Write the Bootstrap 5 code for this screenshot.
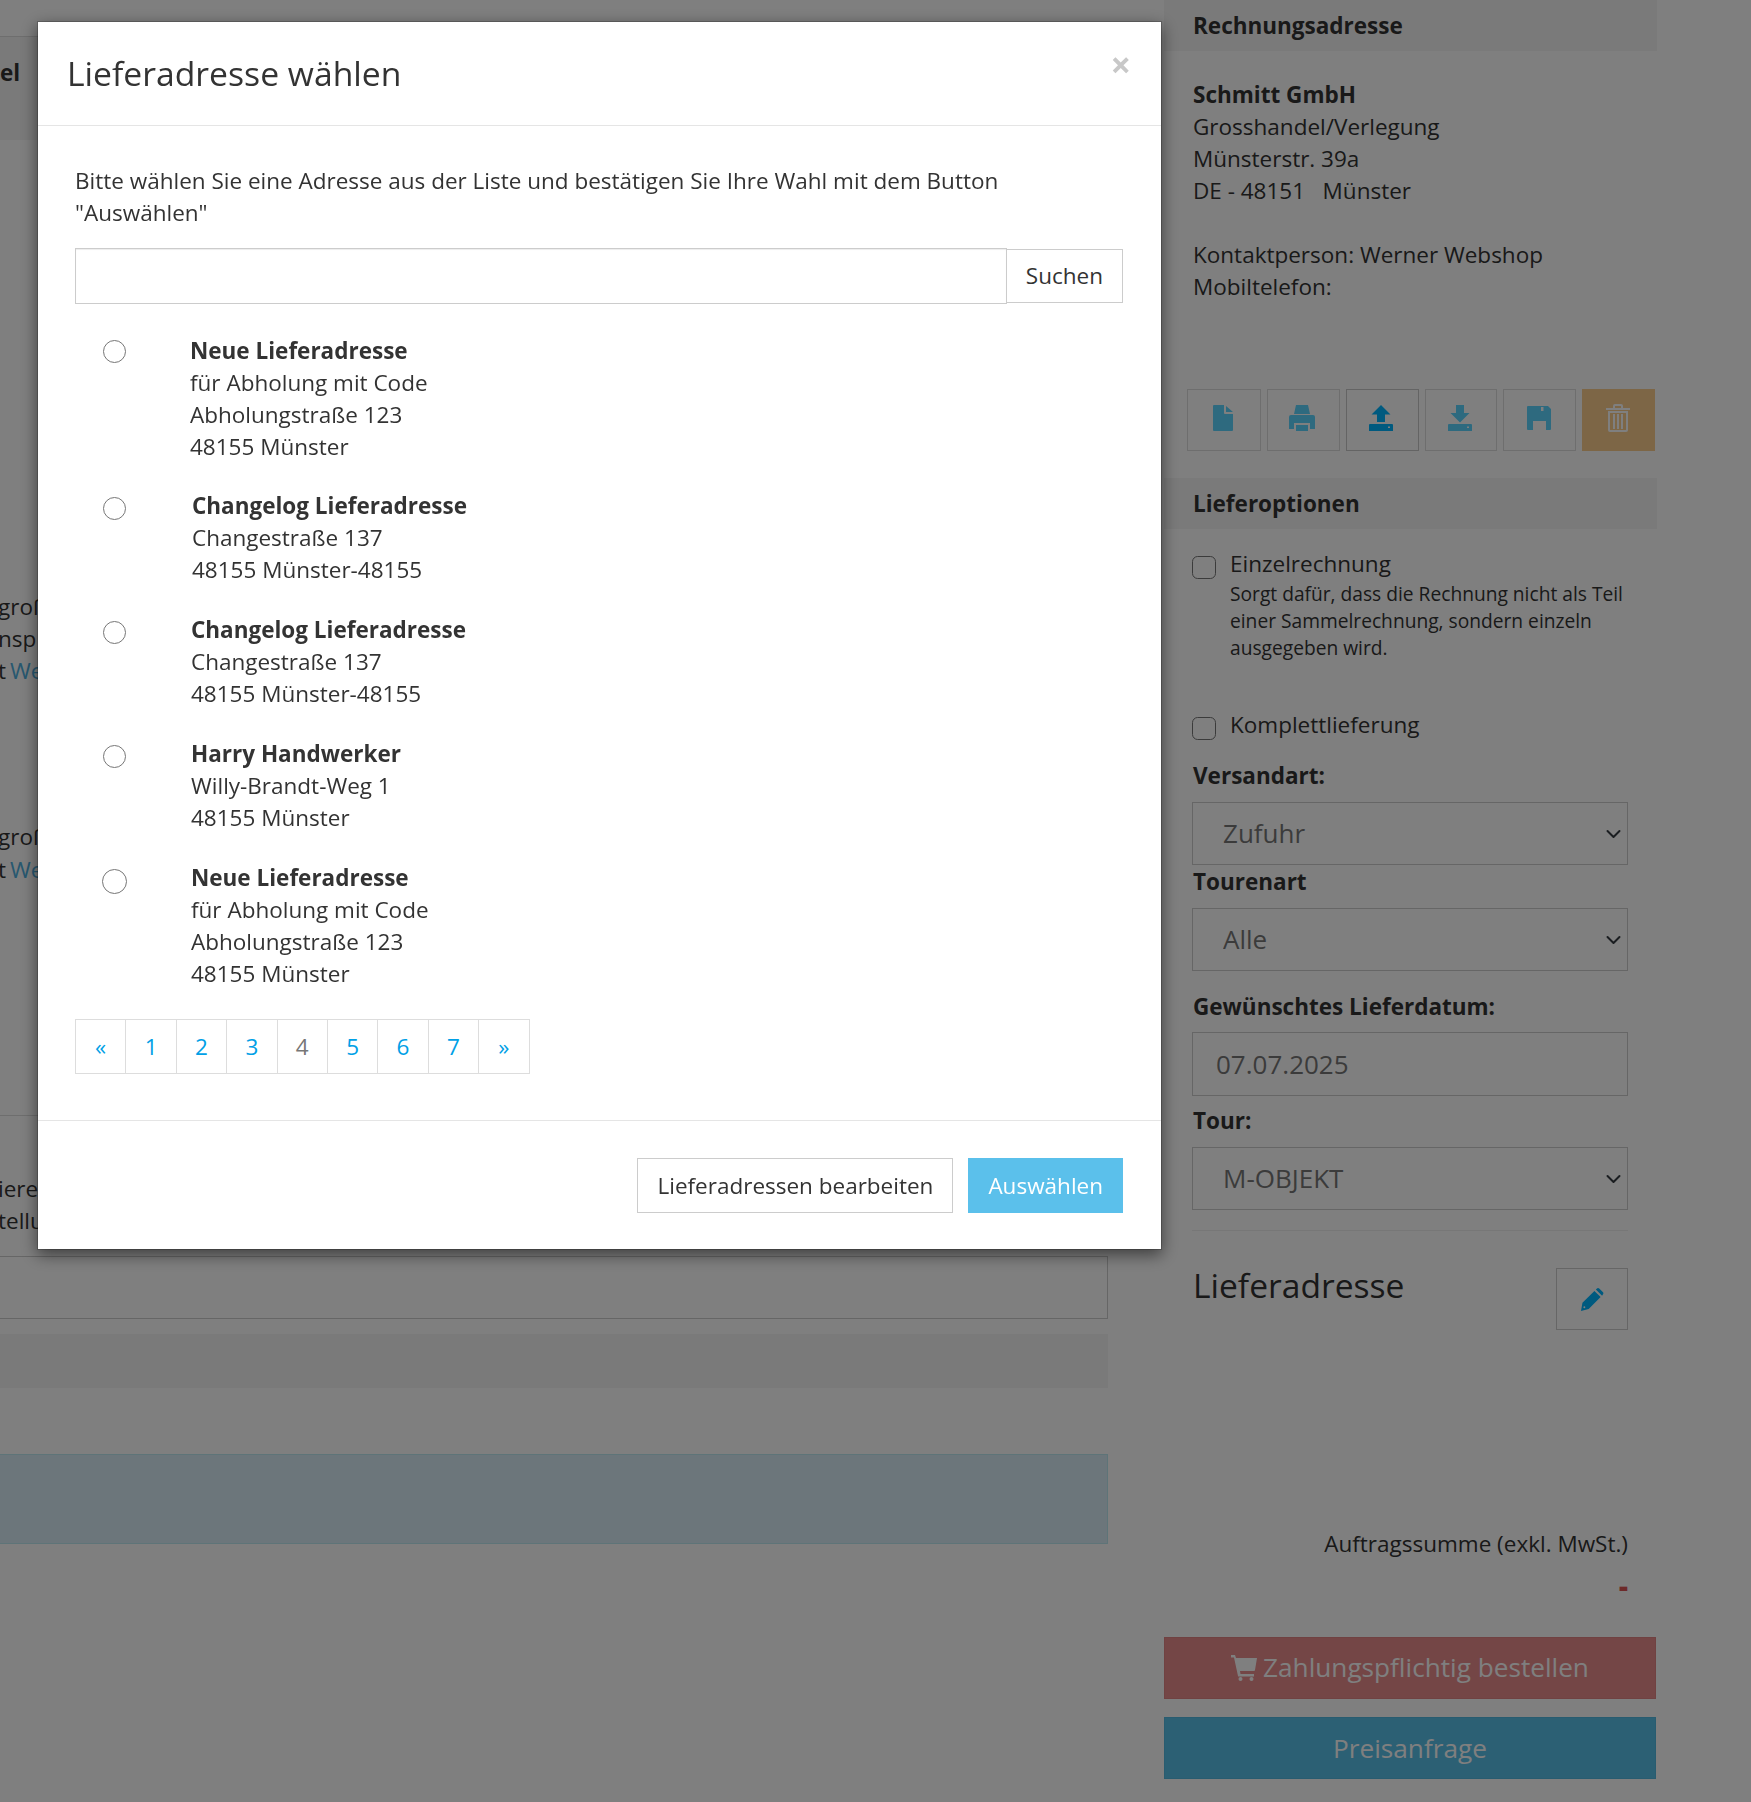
<!DOCTYPE html>
<html lang="de">

<head>
  <meta charset="UTF-8">
  <title>Lieferadresse wählen</title>
  <link href="https://cdn.jsdelivr.net/npm/bootstrap@5.3.0/dist/css/bootstrap.min.css" rel="stylesheet" />
  <style>
    body {
      font-family: "Open Sans", "Liberation Sans", sans-serif;
      font-size: 22.5px;
      line-height: 32px;
      color: #333;
      background: #fff;
      height: 1802px;
      overflow: hidden;
    }

    a { color: #00a0e6; text-decoration: none; }

    /* page behind the dialog */
    .left-side { width: 1108px; flex: none; overflow: hidden; }
    .right-side { width: 493px; flex: none; margin-left: 56px; }

    .article-bar { margin-top: 36px; height: 104px; background: #f5f5f5; border-top: 1px solid #ddd; font-weight: 700; padding-top: 20px; }
    .frag-one, .frag-two, .frag-three { margin-left: -2px; word-spacing: -2px; }
    .frag-one a, .frag-two a { color: #4fb0e0; }
    .frag-one { margin-top: 451px; }
    .frag-two { margin-top: 133px; line-height: 33px; }
    .left-rule { margin: 229px 0 0; height: 1px; background: #ddd; }
    .frag-three { margin-top: 57px; }
    .left-box { margin-top: 19px; height: 63px; border: 1px solid #ccc; border-left: 0; }
    .left-grey { margin-top: 15px; height: 54px; background: #f5f5f5; }
    .left-info { margin-top: 66px; height: 90px; background: #d9edf7; border: 1px solid #bce8f1; border-left: 0; }

    .side-head { height: 51px; line-height: 51px; padding-left: 29px; background: #f5f5f5; font-weight: 700; }
    .bill-addr { margin-top: 28px; padding-left: 29px; }
    .tool-row { margin: 86px 0 0 23px; column-gap: 6px; }
    .tool-btn { width: 72.8px; height: 62px; padding: 0 2px 4px 0; border: 1px solid #dcdcdc; border-radius: 0; color: #5cd4ff; background: #fff; }
    .tool-row .tool-btn:first-child { width: 74px; }
    .tool-on { border-color: #c8c8c8; color: #00b4ff; }
    .tool-del { background: #facc8c; border-color: #facc8c; color: #fff; }
    .options-head { margin-top: 27px; }

    .opt-area { margin-left: 28px; width: 436px; }
    .opt-check { margin-top: 19px; }
    .opt-check + .opt-check { margin-top: 48px; }
    .opt-box { width: 24px; height: 23px; flex: none; margin: 8px 14px 0 0; border: 1.6px solid #767676; border-radius: 4px; background: #fff; }
    .opt-help { font-size: 19.2px; line-height: 27px; }
    .field-label { font-weight: 700; margin: 19px 0 10px 1px; }
    .field-label.tight { margin: 1px 0 10px 1px; }
    .field-label.wide { margin: 20px 0 9px 1px; }
    .field-label.mid { margin: 9px 0 10px 1px; }
    .field-select, .field-input { height: 63px; border: 1px solid #ccc; border-radius: 0; font-size: 26px; color: #777; padding: 0 30px 0 30px; background-position: right 3px center; background-size: 21px 16px; }
    .field-input { padding-left: 23px; height: 64px; }
    .side-rule { margin: 20px 0 0; height: 1px; background: #eee; }
    .ship-title { margin: -3px 0 0 1px; font-size: 33.6px; line-height: 44px; font-weight: 400; }
    .ship-row { margin-top: 35px; }
    .ship-edit { width: 72px; height: 62px; margin-top: 2px; padding: 0; border: 1px solid #ccc; border-radius: 0; color: #00b4ff; background: #fff; }
    .sum-label { margin-top: 198px; text-align: right; }
    .sum-value { margin-top: 9px; text-align: right; font-size: 28px; font-weight: 800; color: #da5454; }
    .order-btn { display: block; width: 492px; height: 62px; padding: 0; border-radius: 0; font-size: 26.2px; color: #fff; }
    .order-red { margin-top: 36px; background: #e88c8c; border-color: #e08484; column-gap: 6px; }
    .order-blue { margin-top: 18px; padding-top: 2px; background: #58c0e8; border-color: #52b8e0; }

    /* dialog */
    .modal-backdrop.show { opacity: .5; }
    .addr-dialog { margin: 21px 0 0 37px; width: 1125px; max-width: none; }
    .addr-dialog .modal-content { border: 1px solid rgba(0, 0, 0, .2); border-radius: 0; box-shadow: 0 5px 15px rgba(0, 0, 0, .5); }
    .addr-dialog .modal-header { height: 104px; padding: 0 29px; border-bottom: 1px solid #e5e5e5; border-radius: 0; align-items: center; justify-content: space-between; }
    .addr-dialog .modal-title { font-size: 33.7px; line-height: 44px; font-weight: 400; margin-top: -2px; }
    .close-x { border: 0; padding: 0; background: none; color: #c8c8c8; font-size: 36px; line-height: 32px; font-weight: 700; margin: -18px 1px 0 0; }
    .addr-dialog .modal-body { padding: 39px 38px 46px 37px; }
    .intro-text { margin-bottom: 19px; }
    .search-group .form-control { height: 56px; border: 1px solid #ccc; border-radius: 0; box-shadow: inset 0 1px 1px rgba(0, 0, 0, .075); }
    .btn-plain { border: 1px solid #ccc; border-radius: 0; background: #fff; color: #333; font-size: 22.5px; line-height: 32px; padding: 10.5px 19px; }
    .search-group .btn-plain { margin: 1px 0 1px -1px; padding: 10px 19px; }
    .addr-list { margin-top: 31px; }
    .addr-row { margin-bottom: 28px; }
    .addr-row:nth-child(1) { margin-bottom: 27px; }
    .addr-pick { width: 116px; flex: none; padding-left: 28px; }
    .addr-row:nth-child(1) .addr-pick { width: 115px; }
    .addr-row:nth-child(2) .addr-pick { width: 117px; }
    .addr-radio { display: block; width: 23px; height: 23px; margin: 6.5px 0 0; border: 1.6px solid #767676; }
    .addr-row:nth-child(1) .addr-radio { margin-top: 4.5px; }
    .addr-row:nth-child(5) .addr-radio { width: 25px; height: 25px; margin: 7px 0 0 -1px; }
    .addr-pages { margin: 29px 0 0; }
    .addr-pages .page-link { width: 51.4px; height: 55px; padding: 10.5px 0; text-align: center; font-size: 22.5px; line-height: 32px; color: #00a0e6; border: 1px solid #ddd; border-radius: 0 !important; }
    .addr-pages .page-current .page-link { color: #777; }
    .addr-dialog .modal-footer { padding: 37px 38px 36px 0; border-top: 1px solid #e5e5e5; border-radius: 0; gap: 15px; }
    .addr-dialog .modal-footer > * { margin: 0; }
    .btn-choose { border: 1px solid #5bc0eb; border-radius: 0; background: #5bc0eb; color: #fff; font-size: 22.5px; line-height: 32px; padding: 10.5px 19px; }

    .ico { display: block; fill: currentColor; }
    .ico-stroke { fill: none; stroke: currentColor; stroke-width: 2; }
  </style>
</head>

<body class="m-0">

  <div class="d-flex">
    <div class="left-side">
      <div class="article-bar">el</div>
      <div class="frag-one text-nowrap">groß<br>nsp<br>t <a href="#">We</a></div>
      <div class="frag-two text-nowrap">groß<br>t <a href="#">We</a></div>
      <div class="left-rule"></div>
      <div class="frag-three text-nowrap">iere<br>tellu</div>
      <div class="left-box"></div>
      <div class="left-grey"></div>
      <div class="left-info"></div>
    </div>

    <div class="right-side">
      <div class="side-head">Rechnungsadresse</div>
      <div class="bill-addr">
        <strong>Schmitt GmbH</strong><br>
        Grosshandel/Verlegung<br>
        Münsterstr. 39a<br>
        DE - 48151 &nbsp; Münster<br>
        <br>
        Kontaktperson: Werner Webshop<br>
        Mobiltelefon:
      </div>

      <div class="tool-row d-flex">
        <button class="btn tool-btn d-flex align-items-center justify-content-center" type="button">
          <svg class="ico" width="20" height="26" viewBox="0 0 20 26"><path d="M0 1Q0 0 1 0H11V8Q11 9 12 9H20V25Q20 26 19 26H1Q0 26 0 25ZM13 1L20 7H13Z"/></svg>
        </button>
        <button class="btn tool-btn d-flex align-items-center justify-content-center" type="button">
          <svg class="ico" width="26" height="26" viewBox="0 0 26 26"><path d="M7 0H19L21 9H5ZM2 10H24Q26 10 26 12V24H21V18H5V24H0V12Q0 10 2 10ZM7 20H19V26H7Z"/></svg>
        </button>
        <button class="btn tool-btn tool-on d-flex align-items-center justify-content-center" type="button">
          <svg class="ico" width="24" height="26" viewBox="0 0 24 26"><path fill-rule="evenodd" d="M12 0L21.5 9.5H16V17H8V9.5H2.5ZM1 19H23Q24 19 24 20V26H0V20Q0 19 1 19ZM19 21.5V23H21V21.5Z"/></svg>
        </button>
        <button class="btn tool-btn d-flex align-items-center justify-content-center" type="button">
          <svg class="ico" width="24" height="26" viewBox="0 0 24 26"><path fill-rule="evenodd" d="M8 0H16V8H21.5L12 17.5L2.5 8H8ZM1 19H23Q24 19 24 20V26H0V20Q0 19 1 19ZM19 21.5V23H21V21.5Z"/></svg>
        </button>
        <button class="btn tool-btn d-flex align-items-center justify-content-center" type="button">
          <svg class="ico" width="24" height="24" viewBox="0 0 24 24"><path fill-rule="evenodd" d="M0 1Q0 0 1 0H21L24 3V23Q24 24 23 24H19V15H6V24H1Q0 24 0 23ZM14 1V5H16.5V1Z"/></svg>
        </button>
        <button class="btn tool-btn tool-del d-flex align-items-center justify-content-center" type="button">
          <svg class="ico ico-stroke" width="24" height="28" viewBox="0 0 24 28"><path d="M8 4V2Q8 1 9 1H15Q16 1 16 2V4M0 5H24M3 8V26Q3 27 4 27H20Q21 27 21 26V8ZM8 10V25M12 10V25M16 10V25"/></svg>
        </button>
      </div>

      <div class="side-head options-head">Lieferoptionen</div>

      <div class="opt-area">
        <div class="opt-check d-flex">
          <input class="form-check-input opt-box" type="checkbox" id="einzel">
          <div>
            <label for="einzel">Einzelrechnung</label>
            <div class="opt-help">Sorgt dafür, dass die Rechnung nicht als Teil einer Sammelrechnung, sondern einzeln ausgegeben wird.</div>
          </div>
        </div>
        <div class="opt-check d-flex">
          <input class="form-check-input opt-box" type="checkbox" id="komplett">
          <label for="komplett">Komplettlieferung</label>
        </div>

        <div class="field-label">Versandart:</div>
        <select class="form-select field-select"><option>Zufuhr</option></select>
        <div class="field-label tight">Tourenart</div>
        <select class="form-select field-select"><option>Alle</option></select>
        <div class="field-label wide">Gewünschtes Lieferdatum:</div>
        <input class="form-control field-input" type="text" value="07.07.2025">
        <div class="field-label mid">Tour:</div>
        <select class="form-select field-select"><option>M-OBJEKT</option></select>
        <div class="side-rule"></div>

        <div class="ship-row d-flex justify-content-between align-items-start">
          <div class="ship-title">Lieferadresse</div>
          <button class="btn ship-edit d-flex align-items-center justify-content-center" type="button">
            <svg class="ico" width="23" height="23" viewBox="0 0 24 24"><path fill-rule="evenodd" d="M0 24L1.5 15.5L14 3L20.5 9.5L8 22ZM2.5 20a1 1 0 1 0 2 0a1 1 0 1 0-2 0ZM15.5 1.5L17 .3Q18-.3 19 .5L23 4.5Q23.7 5.5 23 6.5L22 8Z"/></svg>
          </button>
        </div>

        <div class="sum-label">Auftragssumme (exkl. MwSt.)</div>
        <div class="sum-value">-</div>
      </div>

      <button class="btn order-btn order-red d-flex align-items-center justify-content-center" type="button">
        <svg class="ico" width="26" height="26" viewBox="0 0 26 26"><path d="M0 0H4L5 3H26L24 15Q24 16 23 16H9L9.5 19H23V21.5H7.5Q7 21.5 7 21L3 2.5H0Z"/><circle cx="9.5" cy="24" r="2"/><circle cx="20.5" cy="24" r="2"/></svg>
        Zahlungspflichtig bestellen
      </button>
      <button class="btn order-btn order-blue" type="button">Preisanfrage</button>
    </div>
  </div>

  <div class="modal-backdrop show"></div>

  <div class="modal d-block overflow-hidden">
    <div class="modal-dialog addr-dialog">
      <div class="modal-content">
        <div class="modal-header">
          <h4 class="modal-title">Lieferadresse wählen</h4>
          <button class="close-x" type="button">×</button>
        </div>
        <div class="modal-body">
          <p class="intro-text">Bitte wählen Sie eine Adresse aus der Liste und bestätigen Sie Ihre Wahl mit dem Button "Auswählen"</p>
          <div class="input-group search-group">
            <input class="form-control" type="text">
            <button class="btn btn-plain" type="button">Suchen</button>
          </div>

          <div class="addr-list">
            <div class="addr-row d-flex">
              <div class="addr-pick"><input class="form-check-input addr-radio" type="radio" name="addr"></div>
              <div><strong>Neue Lieferadresse</strong><br>für Abholung mit Code<br>Abholungstraße 123<br>48155 Münster</div>
            </div>
            <div class="addr-row d-flex">
              <div class="addr-pick"><input class="form-check-input addr-radio" type="radio" name="addr"></div>
              <div><strong>Changelog Lieferadresse</strong><br>Changestraße 137<br>48155 Münster-48155</div>
            </div>
            <div class="addr-row d-flex">
              <div class="addr-pick"><input class="form-check-input addr-radio" type="radio" name="addr"></div>
              <div><strong>Changelog Lieferadresse</strong><br>Changestraße 137<br>48155 Münster-48155</div>
            </div>
            <div class="addr-row d-flex">
              <div class="addr-pick"><input class="form-check-input addr-radio" type="radio" name="addr"></div>
              <div><strong>Harry Handwerker</strong><br>Willy-Brandt-Weg 1<br>48155 Münster</div>
            </div>
            <div class="addr-row d-flex mb-0">
              <div class="addr-pick"><input class="form-check-input addr-radio" type="radio" name="addr"></div>
              <div><strong>Neue Lieferadresse</strong><br>für Abholung mit Code<br>Abholungstraße 123<br>48155 Münster</div>
            </div>
          </div>

          <ul class="pagination addr-pages">
            <li class="page-item"><a class="page-link" href="#">«</a></li>
            <li class="page-item"><a class="page-link" href="#">1</a></li>
            <li class="page-item"><a class="page-link" href="#">2</a></li>
            <li class="page-item"><a class="page-link" href="#">3</a></li>
            <li class="page-item page-current"><a class="page-link" href="#">4</a></li>
            <li class="page-item"><a class="page-link" href="#">5</a></li>
            <li class="page-item"><a class="page-link" href="#">6</a></li>
            <li class="page-item"><a class="page-link" href="#">7</a></li>
            <li class="page-item"><a class="page-link" href="#">»</a></li>
          </ul>
        </div>
        <div class="modal-footer">
          <button class="btn btn-plain" type="button">Lieferadressen bearbeiten</button>
          <button class="btn btn-choose" type="button">Auswählen</button>
        </div>
      </div>
    </div>
  </div>

  <script src="https://cdn.jsdelivr.net/npm/bootstrap@5.3.0/dist/js/bootstrap.bundle.min.js"></script>
</body>

</html>
